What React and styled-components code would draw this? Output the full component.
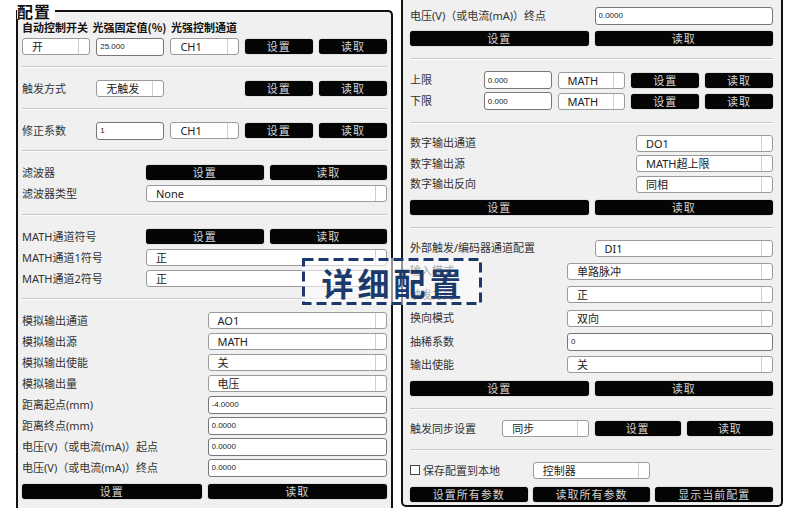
import React from "react";
import styled, { createGlobalStyle } from "styled-components";

const GlobalStyle = createGlobalStyle`
  body {
    margin: 0;
    background: #fff;
    font-family: "Noto Sans", "Noto Sans CJK SC", sans-serif;
  }
`;

const Page = styled.div`
  position: relative;
  display: flex;
  align-items: flex-start;
  gap: 8px;
  width: 790px;
  height: 515px;
  padding-left: 16px;
  box-sizing: border-box;
  overflow: hidden;
`;

const LeftPanel = styled.fieldset`
  margin: 3px 0 0;
  padding: 0 4px;
  min-width: 0;
  width: 377px;
  height: 505px;
  box-sizing: border-box;
  border: 2px solid #111;
  border-bottom: none;
  border-radius: 0 5px 0 0;
  background: #f0f0f0;
`;

const Title = styled.legend`
  margin-left: -5px;
  padding: 0 4px 0 0;
  font-family: "Noto Sans CJK SC", sans-serif;
  font-size: 16px;
  font-weight: 700;
  line-height: 16px;
  letter-spacing: 1px;
  color: #111;
  background: #fff;
`;

const RightPanel = styled.div`
  width: 382px;
  height: 507px;
  box-sizing: border-box;
  padding: 0 8px 0 7px;
  border: 2px solid #111;
  border-top: none;
  border-radius: 0 0 5px 5px;
  background: #f0f0f0;
  display: flex;
  flex-direction: column;
`;

const Section = styled.div`
  display: flex;
  flex-direction: column;
  gap: ${(p) => p.$gap || 0}px;
  padding-top: ${(p) => (p.$pt ?? 10)}px;
  padding-bottom: ${(p) => (p.$pb ?? 9)}px;
`;

const Divider = styled.div`
  height: 1px;
  background: #c9c9c9;
  border-bottom: 1px solid #fbfbfb;
`;

const Row = styled.div`
  display: grid;
  grid-template-columns: ${(p) => p.$cols};
  column-gap: ${(p) => p.$gap ?? 6}px;
  height: ${(p) => p.$h ?? 21}px;
  align-items: center;
`;

const Header = styled.div`
  font-family: "Noto Sans CJK SC", sans-serif;
  font-size: 11px;
  font-weight: 700;
  line-height: 12px;
  color: #111;
  margin-bottom: 3px;
  word-spacing: 2px;
`;

const Label = styled.div`
  font-size: 11px;
  line-height: 14px;
  color: #333;
  white-space: nowrap;
  grid-column: ${(p) => p.$span || "auto"};
`;

const SelectBox = styled.div`
  display: flex;
  height: 17px;
  box-sizing: border-box;
  border: 1px solid #9b9b9b;
  border-radius: 3px;
  background: #fff;
  grid-column: ${(p) => p.$span || "auto"};

  span {
    flex: 1;
    padding-left: 9px;
    font-size: 11px;
    line-height: 15px;
    color: #222;
    white-space: nowrap;
    overflow: hidden;
  }
`;

const Caret = styled.i`
  width: 10px;
  border-left: 1px solid #cfcfcf;
`;

const Field = styled.input`
  height: 18px;
  width: 100%;
  box-sizing: border-box;
  margin: 0;
  padding: 0 3px;
  border: 1px solid #777;
  border-radius: 3px;
  background: #fff;
  font-family: "Liberation Sans", sans-serif;
  font-size: 8px;
  color: #222;
  outline: none;
  grid-column: ${(p) => p.$span || "auto"};
`;

const Btn = styled.div`
  height: 15px;
  border-radius: 3px;
  background: #050505;
  box-shadow: 0 0 1px #555;
  color: #d4d4d4;
  font-size: 11px;
  line-height: 15px;
  letter-spacing: 1px;
  text-align: center;
  white-space: nowrap;
`;

const Check = styled.div`
  display: flex;
  align-items: center;
  gap: 3px;
  font-size: 11px;
  color: #333;
  white-space: nowrap;

  &::before {
    content: "";
    width: 8px;
    height: 8px;
    border: 1px solid #444;
    background: #fff;
  }
`;

const Badge = styled.div`
  position: absolute;
  left: 302px;
  top: 258px;
  width: 180px;
  height: 47px;
  display: flex;
  align-items: center;
  justify-content: center;
  padding-left: 3px;
  box-sizing: border-box;
  background: rgba(255, 255, 255, 0.55);
  color: #1b3a6b;
  font-family: "Noto Sans CJK SC", sans-serif;
  font-size: 32px;
  font-weight: 700;
  letter-spacing: 4px;

  svg {
    position: absolute;
    inset: 0;
  }
`;

const Select = ({ children, span }) => (
  <SelectBox $span={span}>
    <span>{children}</span>
    <Caret />
  </SelectBox>
);

const Input = ({ value, span }) => <Field readOnly value={value} $span={span} />;

const SetRead = ({ cols = "1fr 1fr" }) => (
  <Row $cols={cols} $h={15}>
    <Btn>设置</Btn>
    <Btn>读取</Btn>
  </Row>
);

function App() {
  return (
    <>
      <GlobalStyle />
      <Page>
        <LeftPanel>
          <Title>配置</Title>

          <Section $pt={2}>
            <Header>自动控制开关 光强固定值(%) 光强控制通道</Header>
            <Row $cols="repeat(5, 1fr)">
              <Select>开</Select>
              <Input value="25.000" />
              <Select>CH1</Select>
              <Btn>设置</Btn>
              <Btn>读取</Btn>
            </Row>
          </Section>
          <Divider />

          <Section>
            <Row $cols="repeat(5, 1fr)">
              <Label>触发方式</Label>
              <Select>无触发</Select>
              <div />
              <Btn>设置</Btn>
              <Btn>读取</Btn>
            </Row>
          </Section>
          <Divider />

          <Section>
            <Row $cols="repeat(5, 1fr)">
              <Label>修正系数</Label>
              <Input value="1" />
              <Select>CH1</Select>
              <Btn>设置</Btn>
              <Btn>读取</Btn>
            </Row>
          </Section>
          <Divider />

          <Section $pb={10}>
            <Row $cols="118px 1fr 1fr">
              <Label>滤波器</Label>
              <Btn>设置</Btn>
              <Btn>读取</Btn>
            </Row>
            <Row $cols="118px 1fr 1fr">
              <Label>滤波器类型</Label>
              <Select span="2 / 4">None</Select>
            </Row>
          </Section>
          <Divider />

          <Section>
            <Row $cols="118px 1fr 1fr">
              <Label>MATH通道符号</Label>
              <Btn>设置</Btn>
              <Btn>读取</Btn>
            </Row>
            <Row $cols="118px 1fr 1fr">
              <Label>MATH通道1符号</Label>
              <Select span="2 / 4">正</Select>
            </Row>
            <Row $cols="118px 1fr 1fr">
              <Label>MATH通道2符号</Label>
              <Select span="2 / 4">正</Select>
            </Row>
          </Section>
          <Divider />

          <Section $gap={6}>
            <div>
              {[
                ["模拟输出通道", "AO1"],
                ["模拟输出源", "MATH"],
                ["模拟输出使能", "关"],
                ["模拟输出量", "电压"],
              ].map(([label, value]) => (
                <Row $cols="1fr 1fr" key={label}>
                  <Label>{label}</Label>
                  <Select>{value}</Select>
                </Row>
              ))}
              {[
                ["距离起点(mm)", "-4.0000"],
                ["距离终点(mm)", "0.0000"],
                ["电压(V)（或电流(mA)）起点", "0.0000"],
                ["电压(V)（或电流(mA)）终点", "0.0000"],
              ].map(([label, value]) => (
                <Row $cols="1fr 1fr" key={label}>
                  <Label>{label}</Label>
                  <Input value={value} />
                </Row>
              ))}
            </div>
            <SetRead />
          </Section>
        </LeftPanel>

        <RightPanel>
          <Section $pt={5} $pb={12} $gap={5}>
            <Row $cols="1fr 1fr">
              <Label>电压(V)（或电流(mA)）终点</Label>
              <Input value="0.0000" />
            </Row>
            <SetRead />
          </Section>
          <Divider />

          <Section $pt={10} $pb={10}>
            {["上限", "下限"].map((label) => (
              <Row $cols="repeat(5, 1fr)" key={label}>
                <Label>{label}</Label>
                <Input value="0.000" />
                <Select>MATH</Select>
                <Btn>设置</Btn>
                <Btn>读取</Btn>
              </Row>
            ))}
          </Section>
          <Divider />

          <Section $pt={9} $pb={12} $gap={6}>
            <div>
              {[
                ["数字输出通道", "DO1"],
                ["数字输出源", "MATH超上限"],
                ["数字输出反向", "同相"],
              ].map(([label, value]) => (
                <Row $cols="1fr 137px" $h={20.5} key={label}>
                  <Label>{label}</Label>
                  <Select>{value}</Select>
                </Row>
              ))}
            </div>
            <SetRead />
          </Section>
          <Divider />

          <Section $pt={7} $pb={12.5} $gap={4}>
            <div>
              <Row $cols="1fr 1fr" $h={23.4}>
                <Label>外部触发/编码器通道配置</Label>
                <Select>DI1</Select>
              </Row>
              {[
                ["输入模式", "单路脉冲"],
                ["触发方向", "正"],
                ["换向模式", "双向"],
              ].map(([label, value]) => (
                <Row $cols="1fr 206px" $h={23.4} key={label}>
                  <Label>{label}</Label>
                  <Select>{value}</Select>
                </Row>
              ))}
              <Row $cols="1fr 206px" $h={23.4}>
                <Label>抽稀系数</Label>
                <Input value="0" />
              </Row>
              <Row $cols="1fr 206px" $h={23.4}>
                <Label>输出使能</Label>
                <Select>关</Select>
              </Row>
            </div>
            <SetRead />
          </Section>
          <Divider />

          <Section $pt={8} $pb={10}>
            <Row $cols="repeat(4, 1fr)">
              <Label>触发同步设置</Label>
              <Select>同步</Select>
              <Btn>设置</Btn>
              <Btn>读取</Btn>
            </Row>
          </Section>
          <Divider />

          <Section $pt={8.5} $pb={3} $gap={6.5}>
            <Row $cols="repeat(3, 1fr)" $gap={5}>
              <Check>保存配置到本地</Check>
              <Select>控制器</Select>
            </Row>
            <Row $cols="repeat(3, 1fr)" $gap={5} $h={15}>
              <Btn>设置所有参数</Btn>
              <Btn>读取所有参数</Btn>
              <Btn>显示当前配置</Btn>
            </Row>
          </Section>
        </RightPanel>

        <Badge>
          <svg width="180" height="47" viewBox="0 0 180 47">
            <rect
              x="1.5"
              y="1.5"
              width="177"
              height="44"
              fill="none"
              stroke="#1b3a6b"
              strokeWidth="3"
              strokeDasharray="10 5"
            />
          </svg>
          详细配置
        </Badge>
      </Page>
    </>
  );
}

export default App;
